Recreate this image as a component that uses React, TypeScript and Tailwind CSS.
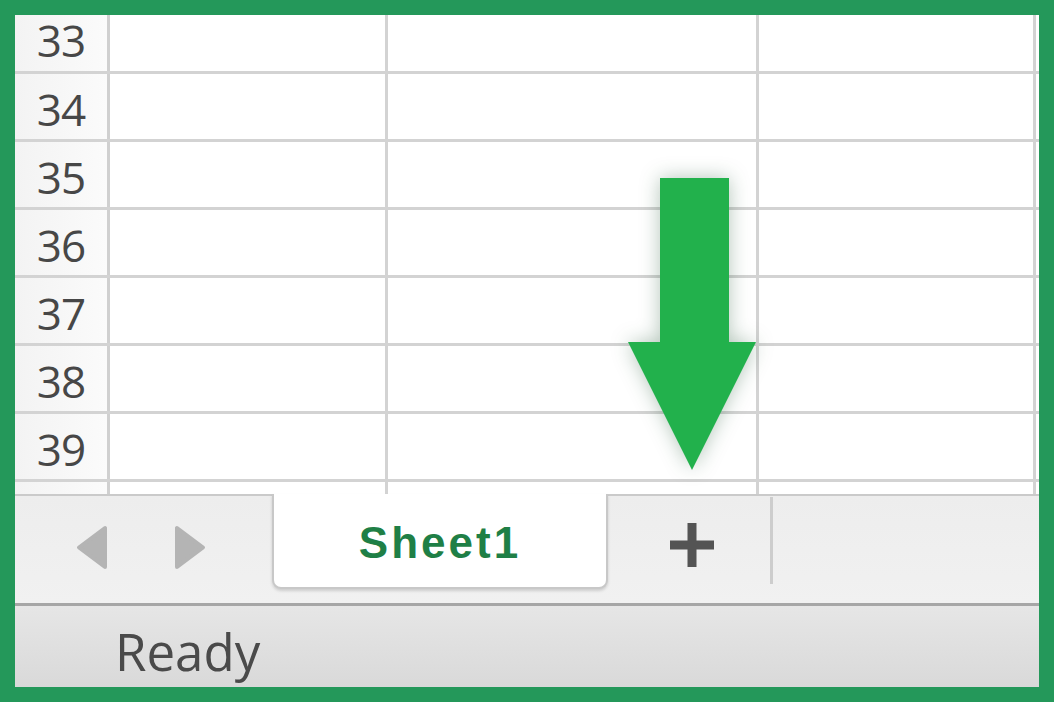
const rows = [33, 34, 35, 36, 37, 38, 39, 0];

const NavArrow = ({ dir }: { dir: "left" | "right" }) => (
  <svg width="32" height="45" viewBox="0 0 32 45">
    <polygon
      points={dir === "left" ? "29,3 29,42 3,22.5" : "3,3 3,42 29,22.5"}
      fill="#b4b4b4"
      stroke="#b4b4b4"
      strokeWidth="4"
      strokeLinejoin="round"
    />
  </svg>
);

const rowHeight = (i: number) => {
  if (i === 0) return "h-[59px] border-b-[3px]";
  if (i === rows.length - 1) return "h-[12px]";
  return "h-[68px] border-b-[3px]";
};

export default function App() {
  return (
    <div className="w-[1054px] h-[702px] bg-[#24985a] p-[15px]">
      <div className="relative flex flex-col h-full bg-white">
        {/* grid */}
        <div className="h-[479px]">
          {rows.map((n, i) => (
            <div key={i} className={`flex border-[#d3d3d3] ${rowHeight(i)}`}>
              <div
                className={`w-[95px] border-r-[3px] border-[#d0d0d0] bg-gradient-to-r from-[#f3f3f3] to-[#fbfbfb] flex items-center justify-center ${i === 0 ? "pb-[6px]" : "pt-[5px]"}`}
              >
                {n > 0 && (
                  <span className="font-['Open_Sans',sans-serif] text-[44px] leading-none tracking-[-1px] text-[#474747]">
                    {n}
                  </span>
                )}
              </div>
              <div className="w-[278px] border-r-[3px] border-[#d3d3d3]" />
              <div className="w-[371px] border-r-[3px] border-[#d3d3d3]" />
              <div className="w-[277px] border-r-[3px] border-[#d3d3d3]" />
              <div className="flex-1" />
            </div>
          ))}
        </div>

        {/* sheet tabs */}
        <div className="h-[109px] flex items-start border-t-2 border-[#cacaca] bg-gradient-to-b from-[#ededed] to-[#f1f1f1]">
          <div className="w-[257px] h-full flex items-center pl-[61px] gap-[66px] pb-[4px]">
            <NavArrow dir="left" />
            <NavArrow dir="right" />
          </div>
          <div className="-mt-[2px] w-[336px] h-[95px] bg-white border-x-2 border-b-2 border-[#c8c8c8] rounded-b-[9px] shadow-[0_2px_3px_rgba(0,0,0,0.15)] flex items-center justify-center pt-[5px]">
            <span className="font-['Liberation_Sans',Arial,sans-serif] font-bold text-[44px] leading-none tracking-[3px] text-[#1f7f46]">
              Sheet1
            </span>
          </div>
          <div className="w-[162px] h-full flex items-center justify-center pl-[5px] pb-[10px]">
            <svg width="44" height="44" viewBox="0 0 44 44">
              <rect x="0" y="17.5" width="44" height="9" fill="#545454" />
              <rect x="17.5" y="0" width="9" height="44" fill="#545454" />
            </svg>
          </div>
          <div className="w-[3px] h-[87px] mt-[1px] bg-[#cdcdcd]" />
          <div className="flex-1" />
        </div>

        {/* status bar */}
        <div className="h-[84px] border-t-[3px] border-[#a6a6a6] bg-gradient-to-b from-[#e6e6e6] to-[#d9d9d9] flex items-center pl-[100px] pt-[10px]">
          <span className="font-['Open_Sans',sans-serif] text-[51px] leading-none text-[#4a4a4a]">
            Ready
          </span>
        </div>

        {/* callout arrow */}
        <svg
          className="absolute left-[613px] top-[163px] drop-shadow-[0_0_10px_rgba(0,60,20,0.3)]"
          width="128"
          height="292"
          viewBox="0 0 128 292"
        >
          <polygon points="32,0 101,0 101,164 128,164 64,292 0,164 32,164" fill="#22b14c" />
        </svg>
      </div>
    </div>
  );
}
